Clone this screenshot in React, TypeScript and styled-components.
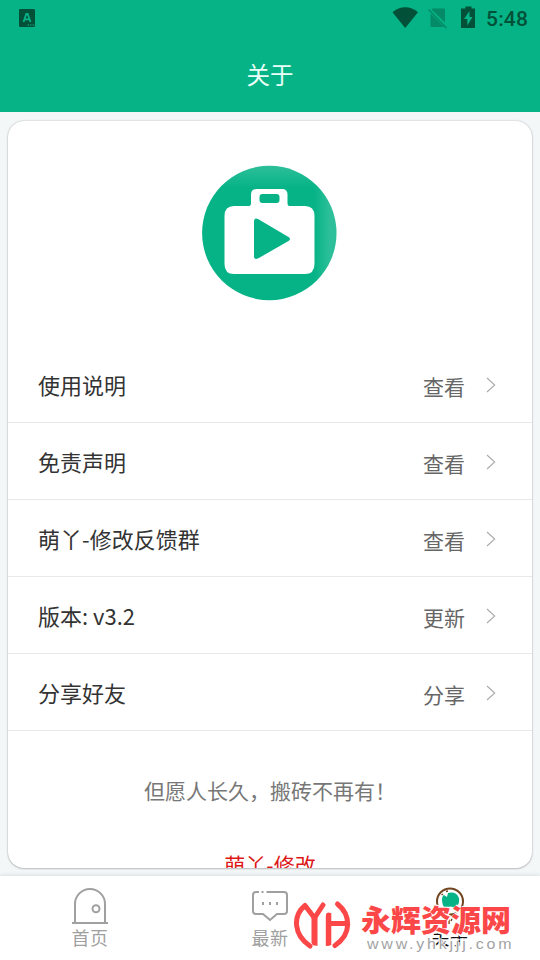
import React from 'react';
import styled, { createGlobalStyle } from 'styled-components';

const Global = createGlobalStyle`
  * { box-sizing: border-box; }
  html, body { margin: 0; padding: 0; }
  body { font-family: "Noto Sans CJK SC", sans-serif; background: #f3f7f8; overflow: hidden; }
`;

const Screen = styled.div`
  position: relative;
  width: 540px;
  height: 960px;
  display: flex;
  flex-direction: column;
  background: #f3f7f8;
  overflow: hidden;
`;

const Header = styled.header`
  height: 112px;
  flex: none;
  background: #05b386;
`;

const StatusBar = styled.div`
  height: 36px;
  padding: 0 12px 0 19px;
  display: flex;
  align-items: center;
  color: #035039;
`;

const StatusIcons = styled.div`
  margin-left: auto;
  display: flex;
  align-items: center;
`;

const Clock = styled.span`
  font: 500 21px/36px Roboto, sans-serif;
  width: 42px;
  white-space: nowrap;
  padding-top: 2px;
  letter-spacing: 0.2px;
`;

const Title = styled.h1`
  margin: 0;
  height: 76px;
  font-size: 23.5px;
  font-weight: 400;
  line-height: 77px;
  text-align: center;
  color: #e9fff8;
`;

const Card = styled.main`
  height: 747px;
  flex: none;
  margin: 9px 8px 0;
  border-radius: 16px;
  background: #fff;
  box-shadow: 0 0 2px rgba(0, 0, 0, 0.26), 0 1px 2px rgba(0, 0, 0, 0.18);
  overflow: hidden;
`;

const LogoArea = styled.div`
  height: 225px;
  padding: 44px 0 0 193px;
`;

const Row = styled.div`
  height: 77px;
  display: flex;
  align-items: center;
  padding: 2px 36px 0 30px;
  border-bottom: 1px solid #e8e8e8;
`;

const Label = styled.span`
  flex: 1;
  font-size: 22px;
  line-height: 32px;
  padding-bottom: 3px;
  color: #333;
`;

const Value = styled.span`
  font-size: 21px;
  line-height: 32px;
  padding-top: 1px;
  margin-right: 21px;
  color: #666;
`;

const Wish = styled.p`
  margin: 43px 0 0;
  padding-left: 136px;
  font-size: 21px;
  line-height: 32px;
  color: #777;
`;

const Credit = styled.p`
  margin: 42px 0 0;
  font-size: 21px;
  line-height: 32px;
  text-align: center;
  color: #dd1717;
`;

const TabBar = styled.nav`
  height: 84px;
  margin-top: auto;
  flex: none;
  display: grid;
  grid-template-columns: repeat(3, 1fr);
  background: #fff;
  box-shadow: 0 -1px 4px rgba(80, 100, 115, 0.16);
`;

const Tab = styled.div<{ $active?: boolean }>`
  display: flex;
  flex-direction: column;
  align-items: center;
  padding-top: 10px;
  font-size: 18px;
  line-height: 22px;
  letter-spacing: 0.5px;
  color: ${p => (p.$active ? '#111' : '#a0a0a0')};
  svg { display: block; height: 40px; flex: none; }
`;

const Watermark = styled.div`
  position: absolute;
  left: 294px;
  top: 899px;
  display: flex;
`;

const Brand = styled.div`
  margin-left: 10px;
  display: flex;
  flex-direction: column;
`;

const BrandName = styled.div`
  font: 900 30px/36px "Noto Sans CJK SC", sans-serif;
  width: 154px;
  padding-top: 1px;
  white-space: nowrap;
  color: #fb4748;
  text-shadow: 0 0 1px #fff, 1px 1px 0 #fff, -1px 1px 0 #fff, 1px -1px 0 #fff, 0 2px 0 #fff;
`;

const BrandUrl = styled.div`
  font: 400 14px/16px "Liberation Sans", sans-serif;
  margin-left: 6px;
  letter-spacing: 2.45px;
  color: #a3a3a3;
  text-shadow: 0 0 1px #fff, 1px 1px 0 #fff, -1px 0 0 #fff;
  white-space: nowrap;
  transform: scaleX(1.14);
  transform-origin: 0 50%;
`;

const items = [
  { label: '使用说明', value: '查看' },
  { label: '免责声明', value: '查看' },
  { label: '萌丫-修改反馈群', value: '查看' },
  { label: '版本: v3.2', value: '更新' },
  { label: '分享好友', value: '分享' },
];

const KeyboardIcon = () => (
  <svg width="16" height="18" viewBox="0 0 16 18">
    <rect width="16" height="18" rx="1.2" fill="#035039" />
    <path d="M4.500 13 7.300 5h1.400l2.800 8M5.500 10.400h5" fill="none" stroke="#05b386" strokeWidth="1.800" />
    <path d="M8.500 16h1.500M11 16h1.500M13.500 16h1.500" stroke="#05b386" />
  </svg>
);

const StatusGlyphs = () => (
  <svg width="94" height="24" viewBox="0 0 94 24">
    <path d="M0.500 6.200C8-.5 18.500-.5 26 6.200L13.200 22Z" fill="#035039" />
    <path d="M40.500 2.500h11.500q1 0 1 1V16.500L39.500 3.500ZM38.500 7.500 52 21H39.500q-1 0-1-1Z" fill="#048a67" />
    <path d="m36.500 3.500 18 18.500" stroke="#048a67" strokeWidth="1.500" />
    <path d="M73.500.5h6v2h3.500v19.500H69V2.500h4.500Z" fill="#035039" />
    <path d="m77.500 5-5.500 8h3.300v6.500l5.200-8.500h-3Z" fill="#05b386" />
  </svg>
);

const AppLogo = () => (
  <svg width="136" height="136" viewBox="0 0 136 136" display="block">
    <defs>
      <linearGradient id="topShine" x1="0" y1="0" x2="0" y2="1">
        <stop offset="0" stopColor="#fff" stopOpacity=".16" />
        <stop offset=".17" stopColor="#fff" stopOpacity="0" />
      </linearGradient>
      <linearGradient id="sideShine">
        <stop offset=".83" stopColor="#fff" stopOpacity="0" />
        <stop offset=".95" stopColor="#fff" stopOpacity=".16" />
      </linearGradient>
    </defs>
    <circle cx="68.300" cy="68" r="67.200" fill="#05b386" />
    <circle cx="68.300" cy="68" r="67.200" fill="url(#topShine)" />
    <circle cx="68.300" cy="68" r="67.200" fill="url(#sideShine)" />
    <path fillRule="evenodd" fill="#fff" d="M55.500 24H81q5.500 0 5.500 5.500V38q0 3 2 3H104q9.500 0 9.500 10v48q0 10-9.500 10H33q-9.500 0-9.500-10V51q0-10 9.500-10h15q2 0 2-3v-8.500q0-5.500 5.500-5.500ZM61.500 29q-3 0-3 3v3q0 3 3 3h14q3 0 3-3v-3q0-3-3-3ZM53 57v34q0 4 4 2.500l30.500-17.500q3-2 0-4L57 54q-4-2-4 3Z" />
  </svg>
);

const Chevron = () => (
  <svg width="10" height="16" viewBox="0 0 10 16">
    <path d="m1 1 7.700 7L1 15" fill="none" stroke="#aaa" strokeWidth="1.100" />
  </svg>
);

const DoorIcon = () => (
  <svg width="38" height="40" viewBox="0 0 38 40" fill="none" stroke="#a0a0a0" strokeWidth="2">
    <path d="M1 37h36M4 37V18a15 15 0 0 1 30 0v19" />
    <circle cx="25" cy="22.800" r="3.500" />
  </svg>
);

const ChatIcon = () => (
  <svg width="38" height="40" viewBox="0 0 38 40" fill="none" stroke="#a0a0a0" strokeWidth="2">
    <path d="M15.500 6H33q3 0 3 3v16q0 3-3 3h-7l-7 6-7-6H5q-3 0-3-3V9q0-3 3-3h3M10.500 6h2" />
    <path d="M11 17.500h2M18 17.500h2M25 17.500h2" strokeWidth="3" />
  </svg>
);

const AboutIcon = () => (
  <svg width="38" height="40" viewBox="0 0 38 40">
    <path d="M18 38v-5l-5-4h12l-4 4-1 2" fill="#fff" stroke="#714420" strokeWidth="1.500" />
    <circle cx="19" cy="15.500" r="13" fill="#fff" stroke="#714420" strokeWidth="2" />
    <path d="M11 14q0-4 2-5l3 2 1-4q8-2 11 5 1 7-4 10-4-3-10 0-3-3-3-8Z" fill="#05b386" />
    <path d="m10.500 9 1.500-1M15 5.500l2-.5" stroke="#714420" strokeWidth="1.500" />
  </svg>
);

const BrandMark = () => (
  <svg width="57" height="52" viewBox="0 0 57 52" fill="none" stroke="#fb4748" strokeWidth="5" strokeLinecap="round">
    <path d="M16 47C-.5 36-1.500 17 11 6.500L20.500 19 29 6M20.500 20v24" strokeLinejoin="round" />
    <path d="M34.500 16v28M34.500 24.500H51M43.500 5C57 16 58 35 41 46.500" />
    <path d="M17.500 17.500h6V47q-3 0-6-3ZM31.800 17q2-3 5.500-3V46q-3 1-5.500 1Z" fill="#fb4748" stroke="none" />
  </svg>
);

export default function App() {
  return (
    <Screen>
      <Global />
      <Header>
        <StatusBar>
          <KeyboardIcon />
          <StatusIcons><StatusGlyphs /><Clock>5:48</Clock></StatusIcons>
        </StatusBar>
        <Title>关于</Title>
      </Header>
      <Card>
        <LogoArea><AppLogo /></LogoArea>
        {items.map(item => (
          <Row key={item.label}>
            <Label>{item.label}</Label>
            <Value>{item.value}</Value>
            <Chevron />
          </Row>
        ))}
        <Wish>但愿人长久，搬砖不再有！</Wish>
        <Credit>萌丫-修改</Credit>
      </Card>
      <TabBar>
        <Tab><DoorIcon />首页</Tab>
        <Tab><ChatIcon />最新</Tab>
        <Tab $active><AboutIcon />关于</Tab>
      </TabBar>
      <Watermark>
        <BrandMark />
        <Brand>
          <BrandName>永辉资源网</BrandName>
          <BrandUrl>www.yhkjjj.com</BrandUrl>
        </Brand>
      </Watermark>
    </Screen>
  );
}
